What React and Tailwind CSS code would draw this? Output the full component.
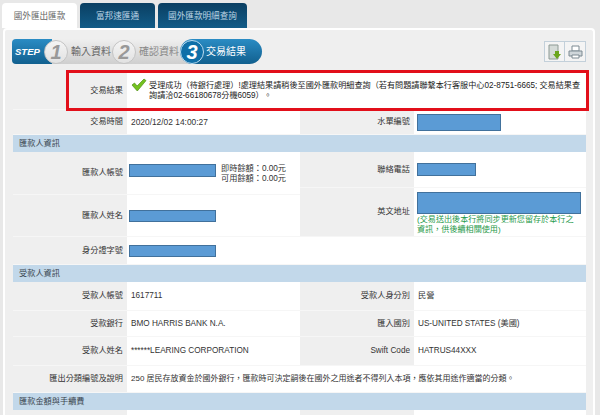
import React from 'react'

const font = 'font-["Liberation_Sans","Noto_Sans_CJK_TC",sans-serif]'

// blue box that hides personal data in the screenshot
const Mask = ({ className }) => (
  <div className={`bg-[#5b9bd5] border border-[#41719c] ${className}`} />
)

const Label = ({ className = '', children }) => (
  <div className={`bg-[#efefef] border-b border-[#f6f6f6] flex items-center justify-end pr-1 text-[#333] whitespace-nowrap ${className}`}>{children}</div>
)

const Value = ({ className = '', children }) => (
  <div className={`bg-white border-b border-[#f6f6f6] flex items-center pl-[4px] text-[#333] whitespace-nowrap ${className}`}>{children}</div>
)

const Section = ({ className = '', children }) => (
  <div className={`col-span-4 bg-[#c2d8ea] flex items-center pl-[6px] text-[#3a4650] ${className}`}>{children}</div>
)

const StepCircle = ({ n, active }) => (
  <span className={active
    ? 'w-[24px] h-[24px] rounded-full border border-[#bcdcf0] bg-[#0f6fa8] text-white flex items-center justify-center text-[20px] font-bold italic shrink-0'
    : 'w-[24px] h-[24px] rounded-full border border-[#c4c4c4] bg-gradient-to-b from-[#f4f4f4] to-[#e2e2e2] text-[#999] flex items-center justify-center text-[20px] font-bold italic shrink-0'}>{n}</span>
)

const App = () => {
  return (
    <div className={`w-[600px] h-[415px] overflow-hidden bg-[#e8e8e8] pt-[3px] text-[8.2px] leading-[10px] ${font}`}>
      <div className="flex h-[25px] ml-[2px] gap-[3px] text-[8.6px]">
        <div className="w-[75px] bg-white rounded-t flex items-center justify-center text-[#666]">國外匯出匯款</div>
        <div className="w-[75px] rounded-t bg-gradient-to-b from-[#0a3f62] to-[#125c88] flex items-center justify-center text-[#bcd4e4]">富邦速匯通</div>
        <div className="w-[89px] rounded-t bg-gradient-to-b from-[#0a3f62] to-[#125c88] flex items-center justify-center text-[#bcd4e4]">國外匯款明細查詢</div>
      </div>

      <div className="ml-[3px] w-[592px] h-[400px] bg-[#efefef] border-[2px] border-b-0 border-white rounded-t pl-[8px] pr-[4px] pt-[9px]">
        <div className="flex items-center justify-between h-[25px] w-[574px]">
          <div className="flex items-center h-[25px] w-[250px] -ml-[1px] rounded-full bg-gradient-to-b from-[#efefef] to-[#cfcfcf] text-[10px] whitespace-nowrap">
            <div className="h-full w-[40px] pl-[3px] rounded-l-[4px] bg-gradient-to-b from-[#2a8cc4] to-[#11608f] flex items-center text-white font-bold italic text-[9.5px]">STEP</div>
            <div className="-ml-[8px]"><StepCircle n="1" /></div>
            <span className="ml-[3px] w-[41px] text-[#666]">輸入資料</span>
            <StepCircle n="2" />
            <span className="ml-[3px] w-[41px] text-[#888]">確認資料</span>
            <div className="flex items-center flex-1 h-full rounded-full bg-gradient-to-b from-[#2a8cc4] to-[#11608f]">
              <StepCircle n="3" active />
              <span className="ml-[2px] text-white">交易結果</span>
            </div>
          </div>
          <div className="flex mr-[1px]">
            <div className="w-[21px] h-[21px] border border-[#c3d0da] bg-[#f4f4f4] flex items-center justify-center">
              <svg width="14" height="16" viewBox="0 0 14 16">
                <path d="M1 1h9v14H1z" fill="#d5dbd8" stroke="#8d9a94" />
                <path d="M7 7h4v3h2l-4 5-4-5h2z" fill="#6aa51d" />
              </svg>
            </div>
            <div className="w-[21px] h-[21px] border border-l-0 border-[#c3d0da] bg-[#f4f4f4] flex items-center justify-center">
              <svg width="15" height="14" viewBox="0 0 15 14">
                <path d="M4 1h7v5H4z" fill="#fff" stroke="#7c8a92" />
                <path d="M1 6h13v5H1z" fill="#cfd6da" stroke="#7c8a92" />
                <path d="M4 10h7v3H4z" fill="#fff" stroke="#7c8a92" />
              </svg>
            </div>
          </div>
        </div>

        <div className="mt-[8px] w-[573px] grid grid-cols-[114px_173px_114px_172px] grid-rows-[38px_25px_17px_36px_7px_42px_28px_17px_29px_26px_29px_27px_17px_30px]">
          <Label className="relative">
            交易結果
            <div className="absolute left-[53px] -top-[2px] w-[523px] h-[41px] border-[3px] border-[#e20f1a]" />
          </Label>
          <Value className="col-span-3 !items-start pt-[6px] !pl-[4px]">
            <svg width="16" height="14" viewBox="0 0 16 14" className="shrink-0">
              <path d="M1 7l2.5-2 2.6 3L13 1l2 1.6L6.3 13z" fill="#74c21f" stroke="#4f8f14" strokeWidth="0.7" />
            </svg>
            <p className="text-[#222] text-[8.15px] ml-[2px] mt-[3px]">受理成功（待銀行處理）!處理結果請稍後至國外匯款明細查詢（若有問題請聯繫本行客服中心02-8751-6665; 交易結果查<br />詢請洽02-66180678分機6059）。</p>
          </Value>

          <Label>交易時間</Label>
          <Value className="text-[8.4px]">2020/12/02 14:00:27</Value>
          <Label>水單編號</Label>
          <Value className="!pl-[3px]"><Mask className="w-[84px] h-[17px]" /></Value>

          <Section>匯款人資訊</Section>

          <Label className="row-span-2">匯款人帳號</Label>
          <Value className="row-span-2 !pl-[2px] gap-[5px] !items-start pt-[12px]">
            <Mask className="w-[87px] h-[13px]" />
            <div>即時餘額：0.00元<br />可用餘額：0.00元</div>
          </Value>
          <Label>聯絡電話</Label>
          <Value className="!pl-[3px]"><Mask className="w-[59px] h-[13px]" /></Value>

          <Label className="row-span-2 col-start-3 row-start-5">英文地址</Label>
          <Value className="row-span-2 col-start-4 row-start-5 !pl-[3px] flex-col !items-start pt-[4px]">
            <Mask className="w-[164px] h-[22px]" />
            <div className="text-[#1f9a4a] text-[8.1px] mt-[1px]">(交易送出後本行將同步更新您留存於本行之<br />資訊，供後續相關使用)</div>
          </Value>

          <Label className="col-start-1 row-start-6">匯款人姓名</Label>
          <Value className="col-start-2 row-start-6 !pl-[2px]"><Mask className="w-[87px] h-[12px]" /></Value>

          <Label>身分證字號</Label>
          <Value className="!pl-[2px]"><Mask className="w-[87px] h-[12px]" /></Value>
          <Value className="col-span-2" />

          <Section>受款人資訊</Section>

          <Label>受款人帳號</Label>
          <Value>1617711</Value>
          <Label>受款人身分別</Label>
          <Value>民營</Value>

          <Label>受款銀行</Label>
          <Value>BMO HARRIS BANK N.A.</Value>
          <Label>匯入國別</Label>
          <Value>US-UNITED STATES (美國)</Value>

          <Label>受款人姓名</Label>
          <Value>******LEARING CORPORATION</Value>
          <Label>Swift Code</Label>
          <Value>HATRUS44XXX</Value>

          <Label>匯出分類編號及說明</Label>
          <Value className="col-span-3 text-[8px]">250 居民存放資金於國外銀行，匯款時可決定嗣後在國外之用途者不得列入本項，應依其用途作適當的分類。</Value>

          <Section>匯款金額與手續費</Section>

          <Label />
          <Value />
          <Label />
          <Value />
        </div>
      </div>
    </div>
  )
}

export default App
